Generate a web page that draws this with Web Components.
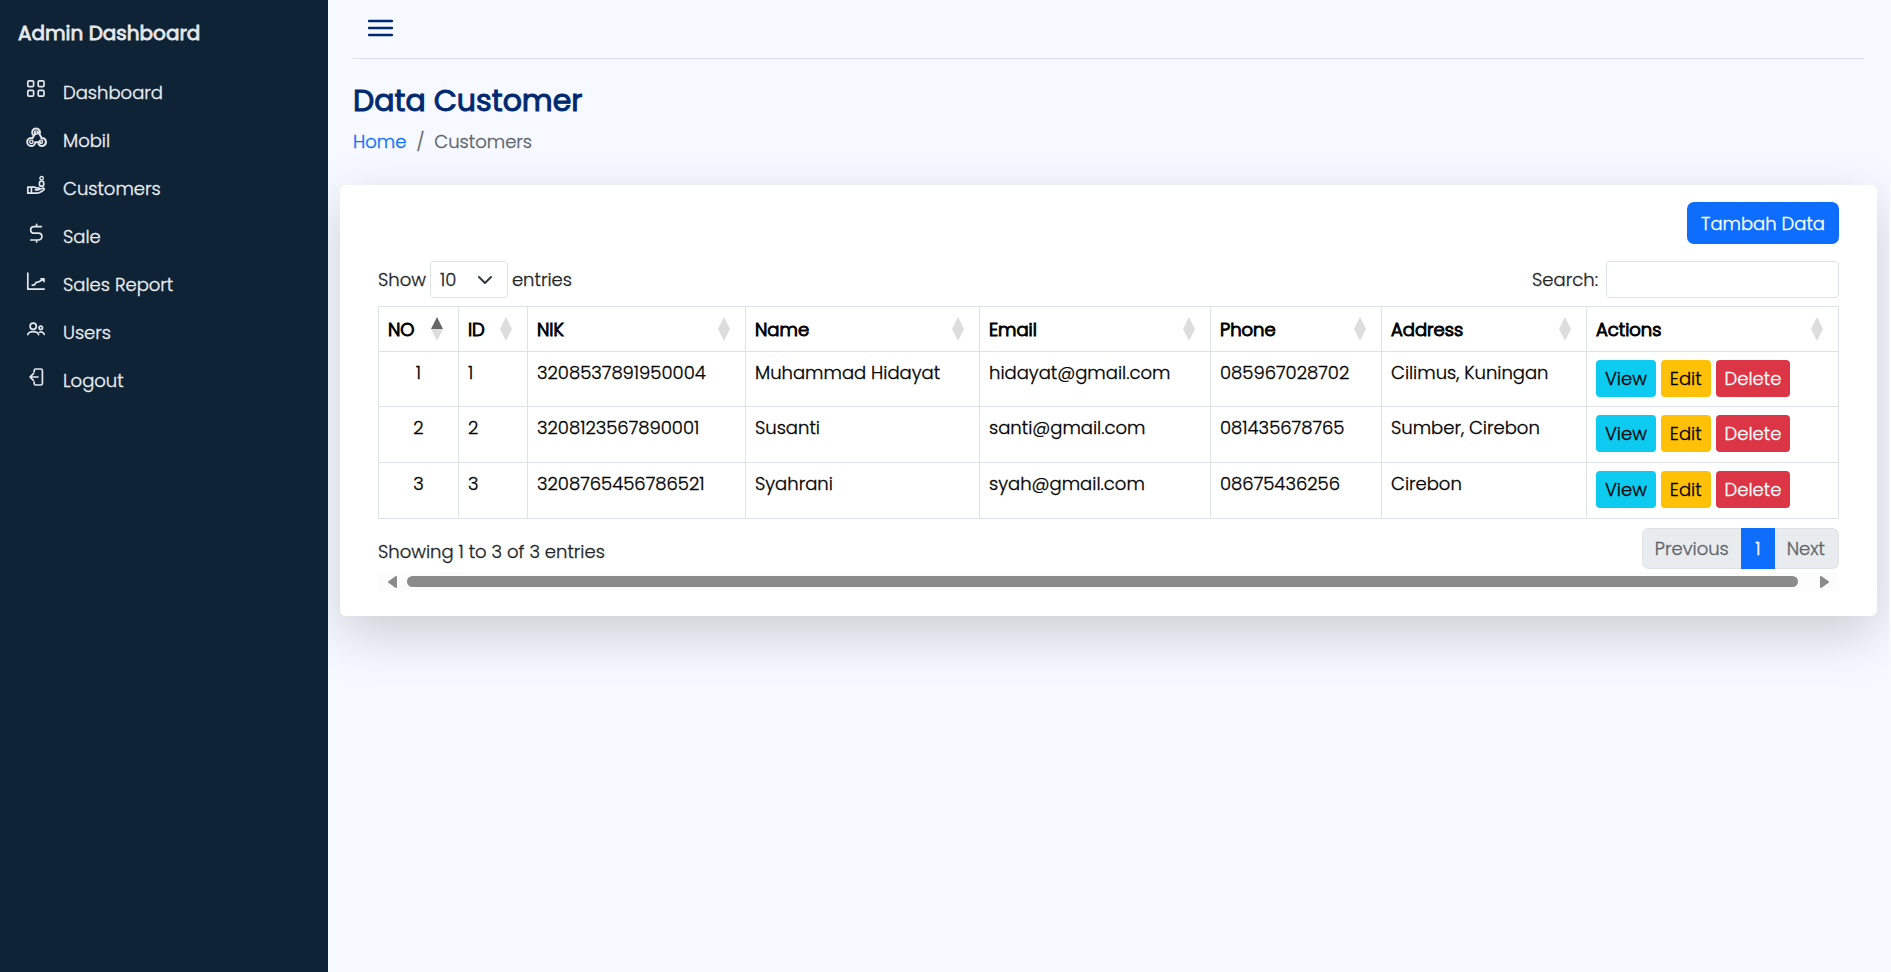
<!DOCTYPE html>
<html lang="id">
<head>
<meta charset="utf-8">
<meta name="viewport" content="width=device-width, initial-scale=1">
<title>Data Customer - Admin Dashboard</title>
<style>
  html, body { margin: 0; min-height: 100%; }
  body {
    background: #f6f9ff;
    color: #212529;
    font: 300 18px/27px Poppins, Inter, "Open Sans", sans-serif;
    -webkit-text-stroke: .3px;
  }
</style>
</head>
<body>
<admin-app></admin-app>

<script>
const define = (name, html, setup) => {
  const template = document.createElement('template');
  template.innerHTML = html;
  customElements.define(name, class extends HTMLElement {
    constructor() {
      super();
      this.attachShadow({ mode: 'open' }).append(template.content.cloneNode(true));
    }
    connectedCallback() {
      if (setup && !this.ready) { this.ready = true; setup(this, this.shadowRoot); }
    }
  });
};

const ICONS = {
  grid: '<rect x=".8" y=".8" width="5.8" height="5.8" rx="1.2"/><rect x="11.2" y=".8" width="5.8" height="5.8" rx="1.2"/><rect x=".8" y="10.4" width="5.8" height="5.8" rx="1.2"/><rect x="11.2" y="10.4" width="5.8" height="5.8" rx="1.2"/>',
  nodes: '<path d="M5.600 6.400A4 4 0 1 1 12.600 6.400L15 10.400M12.600 6.400 11.400 4.200M5.400 10.200 8.600 5M4 10A4 4 0 1 0 8.200 14.200H13.400M14.400 10A4 4 0 1 1 11.600 16.200" stroke-width="2"/><circle cx="9.100" cy="4.600" r="1.700" stroke-width="1.400"/><circle cx="4.400" cy="13.800" r="1.700" stroke-width="1.400"/><circle cx="13.900" cy="13.800" r="1.700" stroke-width="1.400"/>',
  hand: '<circle cx="14.6" cy="2.2" r="1.700" stroke-width="1.400"/><rect x="12.5" y="5.200" width="4.200" height="5" rx="1.800"/><path d="M.8 11.2h3.600v6H.8zM4.600 11.600c2-1.400 3.200-.6 4.200.2h2.400c1.600 0 1.600 2 0 2H8.400M11.800 13.400l4-1.200c1.400-.3 2 1.200.8 1.900-2.600 1.600-4 3.100-6.600 3.100H4.600"/>',
  dollar: '<path d="M9.600.4v2M9.600 16v2M14.300 2.600H7.400C2.400 2.600 2.400 9.200 7.400 9.200h3.800c5 0 5 6.800 0 6.800H3.800"/>',
  chart: '<path d="M.8.4v16.800h17M4.600 13.200h2c1 0 1.200-.4 1.700-1.600.5-1 1-1.400 2-1.400.9 0 1.500-.2 2.300-.9L17 7.200M13.400 6.800H17v3.400" stroke-linecap="butt"/>',
  users: '<circle cx="6.200" cy="6.200" r="3.100"/><path d="M.8 14.600c1.200-4 9.600-4 10.800 0"/><circle cx="13.800" cy="7.800" r="1.700"/><path d="M12.400 12.200c2-.8 4.200 0 4.800 2.200"/>',
  logout: '<path d="M7.200 4V2.400Q7.200 1 8.600 1h5.200Q15.400 1 15.400 2.600v12.800q0 1.600-1.600 1.600H8.600q-1.400 0-1.400-1.400V14M11 9H3.200M6.400 5.600 3 9l3.400 3.400"/>'
};

define('nav-item', `
  <style>
    :host { display: block; }
    a { display: flex; align-items: center; gap: 18px; height: 48px; padding: 0 27px; color: #eef1f4; text-decoration: none; }
    svg { flex: none; width: 18px; height: 18px; padding-bottom: 6px; fill: none; stroke: #e4e7eb; stroke-width: 1.7; stroke-linecap: round; stroke-linejoin: round; overflow: visible; }
  </style>
  <a href="#"><svg viewBox="0 0 18 18" aria-hidden="true"></svg><slot></slot></a>`,
  (host, root) => { root.querySelector('svg').innerHTML = ICONS[host.getAttribute('icon')]; });

define('side-bar', `
  <style>
    :host { display: block; background: #0f2337; }
    .brand { padding: 20px 18px 21px; font-size: 20px; font-weight: 400; -webkit-text-stroke: .8px; color: #e6e9ec; line-height: 27px; }
    nav { display: flex; flex-direction: column; }
  </style>
  <div class="brand">Admin Dashboard</div>
  <nav aria-label="Main">
    <nav-item icon="grid">Dashboard</nav-item>
    <nav-item icon="nodes">Mobil</nav-item>
    <nav-item icon="hand">Customers</nav-item>
    <nav-item icon="dollar">Sale</nav-item>
    <nav-item icon="chart">Sales Report</nav-item>
    <nav-item icon="users">Users</nav-item>
    <nav-item icon="logout">Logout</nav-item>
  </nav>`);

define('top-bar', `
  <style>
    :host { display: flex; align-items: center; height: 58px; margin: 0 25px; border-bottom: 1px solid #dbdfe5; }
    button { display: flex; padding: 0 15px 2px; border: 0; background: none; }
    svg { width: 25px; height: 18px; stroke: #012970; stroke-width: 2.4; stroke-linecap: round; }
  </style>
  <button type="button" aria-label="Toggle sidebar">
    <svg viewBox="0 0 25 18" aria-hidden="true"><path d="M1 2h23M1 9h23M1 16h23"/></svg>
  </button>`);

define('page-heading', `
  <style>
    :host { display: block; padding: 23px 25px 30px; }
    h1 { margin: 0 0 8px; font-size: 30px; line-height: 38px; font-weight: 400; -webkit-text-stroke: 1px; color: #012970; }
    ol { display: flex; gap: 10px; margin: 0; padding: 0; list-style: none; color: #5c636a; }
    a { color: #0d6efd; text-decoration: none; }
  </style>
  <h1>Data Customer</h1>
  <nav aria-label="Breadcrumb"><ol><li><a href="#">Home</a></li><li aria-hidden="true">/</li><li>Customers</li></ol></nav>`);

define('action-button', `
  <style>
    :host { display: inline-flex; }
    button { height: 37px; padding: 0 9px; border: 0; border-radius: 4px; font: inherit; -webkit-text-stroke: inherit; color: #000; background: #0dcaf0; }
    :host([kind=primary]) button { height: 42px; padding: 0 14px; border-radius: 7px; color: #fff; background: #0d6efd; }
    :host([kind=warning]) button { background: #ffc107; }
    :host([kind=danger]) button { color: #fff; background: #dc3545; }
  </style>
  <button type="button"><slot></slot></button>`);

define('table-controls', `
  <style>
    :host { display: flex; justify-content: space-between; align-items: center; }
    label { display: flex; align-items: center; gap: 4px; }
    .search { gap: 8px; }
    .pick { display: grid; align-items: center; }
    .pick > * { grid-area: 1 / 1; }
    select, input { box-sizing: border-box; height: 37px; border: 1px solid #dee2e6; border-radius: 4px; background: #fff; font: inherit; color: inherit; }
    select { appearance: none; width: 78px; padding: 0 9px; }
    svg { justify-self: end; width: 14px; height: 14px; margin-right: 16px; pointer-events: none; fill: none; stroke: #343a40; stroke-width: 2; stroke-linecap: round; stroke-linejoin: round; }
    input { width: 233px; padding: 0 9px; }
  </style>
  <label><span>Show</span>
    <span class="pick"><select><option>10</option><option>25</option><option>50</option><option>100</option></select>
    <svg viewBox="0 0 14 14" aria-hidden="true"><path d="M1 4l6 6 6-6"/></svg></span>
    <span>entries</span></label>
  <label class="search"><span>Search:</span><input type="search"></label>`);

const COLUMNS = [['NO', 80], ['ID', 69], ['NIK', 218], ['Name', 234], ['Email', 231], ['Phone', 171], ['Address', 205], ['Actions', 252]];
const ROWS = [
  ['1', '1', '3208537891950004', 'Muhammad Hidayat', 'hidayat@gmail.com', '085967028702', 'Cilimus, Kuningan'],
  ['2', '2', '3208123567890001', 'Susanti', 'santi@gmail.com', '081435678765', 'Sumber, Cirebon'],
  ['3', '3', '3208765456786521', 'Syahrani', 'syah@gmail.com', '08675436256', 'Cirebon']
];

define('customer-table', `
  <style>
    :host { display: block; padding-right: 1px; }
    table { width: 100%; table-layout: fixed; border-collapse: collapse; color: #000; }
    th, td { box-sizing: border-box; padding: 0 9px; border: 1px solid #dee2e6; text-align: left; white-space: nowrap; }
    th { height: 45px; font-weight: 300; -webkit-text-stroke: 1px; }
    td { height: 55px; padding-top: 7px; vertical-align: top; }
    tr + tr td { height: 56px; }
    td:first-child { text-align: center; }
    td:last-child { padding-top: 8px; }
    .head { display: flex; align-items: center; justify-content: space-between; padding-right: 6px; }
    svg { flex: none; width: 12px; height: 24px; fill: #ddd; }
    [aria-sort] .up { fill: #666; }
    .actions { display: flex; gap: 5px; }
  </style>
  <table><colgroup></colgroup><thead><tr></tr></thead><tbody></tbody></table>`,
  (host, root) => {
    root.querySelector('colgroup').innerHTML = COLUMNS.map(([, w]) => `<col style="width:${w}px">`).join('');
    root.querySelector('thead tr').innerHTML = COLUMNS.map(([name], i) =>
      `<th scope="col"${i ? '' : ' aria-sort="ascending"'}><div class="head"><span>${name}</span><svg viewBox="0 0 12 24" aria-hidden="true"><path class="up" d="M0 12 6 0l6 12z"/><path d="M0 12h12L6 24z"/></svg></div></th>`).join('');
    root.querySelector('tbody').innerHTML = ROWS.map(row =>
      `<tr>${row.map(v => `<td>${v}</td>`).join('')}<td><div class="actions"><action-button kind="info">View</action-button><action-button kind="warning">Edit</action-button><action-button kind="danger">Delete</action-button></div></td></tr>`).join('');
  });

define('table-footer', `
  <style>
    :host { display: flex; justify-content: space-between; align-items: flex-start; }
    p { margin: 0; padding-top: 10px; }
    nav { display: flex; }
    button { box-sizing: border-box; height: 41px; padding: 0 12px; border: 1px solid #dee2e6; background: #e9ecef; color: #5c636a; font: inherit; -webkit-text-stroke: inherit; }
    button:first-child { border-right: 0; border-radius: 7px 0 0 7px; }
    button:last-child { border-left: 0; padding-right: 13px; border-radius: 0 7px 7px 0; }
    .current { width: 34px; padding: 0; border-color: #0d6efd; background: #0d6efd; color: #fff; }
  </style>
  <p>Showing 1 to 3 of 3 entries</p>
  <nav aria-label="Pagination">
    <button type="button" disabled>Previous</button><button type="button" class="current" aria-current="page">1</button><button type="button" disabled>Next</button>
  </nav>`);

define('scroll-track', `
  <style>
    :host { display: flex; align-items: center; gap: 10px; height: 19px; padding: 0 10px; background: #fcfcfc; }
    svg { flex: none; width: 9px; height: 12px; fill: #8b8b8b; stroke: #8b8b8b; stroke-width: 2; stroke-linejoin: round; }
    .thumb { flex: 1; height: 11px; margin-right: 12px; border-radius: 6px; background: #8b8b8b; }
  </style>
  <svg viewBox="0 0 9 12" aria-hidden="true"><path d="M8 1v10L1 6z"/></svg>
  <div class="thumb"></div>
  <svg viewBox="0 0 9 12" aria-hidden="true"><path d="M1 1v10l7-5z"/></svg>`);

define('data-card', `
  <style>
    :host { display: flex; flex-direction: column; margin: 0 12px; padding: 17px 38px 25px; border-radius: 6px; background: #fff; box-shadow: 0 18px 54px rgba(0, 0, 0, .175); }
    action-button { align-self: flex-end; margin-bottom: 17px; }
    customer-table { margin: 8px 0 9px; }
    scroll-track { margin-top: 3px; }
  </style>
  <action-button kind="primary">Tambah Data</action-button>
  <table-controls></table-controls>
  <customer-table></customer-table>
  <table-footer></table-footer>
  <scroll-track></scroll-track>`);

define('admin-app', `
  <style>
    :host { display: grid; grid-template-columns: 328px minmax(0, 1fr); min-height: 100vh; padding-right: 2px; }
    main { overflow: hidden; }
  </style>
  <side-bar></side-bar>
  <main>
    <top-bar></top-bar>
    <page-heading></page-heading>
    <data-card></data-card>
  </main>`);
</script>
</body>
</html>
